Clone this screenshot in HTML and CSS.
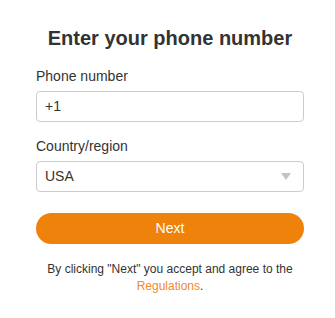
FILE: index.html
```html
<!DOCTYPE html>
<html>
<head>
<meta charset="utf-8">
<link rel="stylesheet" href="styles.css">
</head>
<body>
<div class="page">
  <h1 class="title">Enter your phone number</h1>
  <div class="field">
    <div class="label">Phone number</div>
    <div class="box">+1</div>
  </div>
  <div class="field">
    <div class="label">Country/region</div>
    <div class="box select">
      <span>USA</span>
      <span class="arrow"></span>
    </div>
  </div>
  <div class="btn">Next</div>
  <p class="note">By clicking "Next" you accept and agree to the <a class="link">Regulations</a>.</p>
</div>
</body>
</html>
```
FILE: styles.css
```css
html, body { margin: 0; padding: 0; background: #fff; }
body { font-family: "Liberation Sans", Arial, sans-serif; color: #333; }
.page { width: 268px; margin-left: 36px; padding-top: 27px; }
.title { margin: 0; font-size: 20px; font-weight: bold; text-align: center; line-height: 23px; color: #333; }
.field { margin-top: 18px; }
.field + .field { margin-top: 16px; }
.label { font-size: 14px; line-height: 16px; margin-bottom: 7px; color: #333; }
.box { box-sizing: border-box; height: 31px; border: 1px solid #ccc; border-radius: 4px; padding: 0 8px; font-size: 14px; line-height: 29px; color: #333; display: flex; align-items: center; justify-content: space-between; }
.arrow { width: 0; height: 0; border-left: 5px solid transparent; border-right: 5px solid transparent; border-top: 7px solid #c4c4c4; margin-right: 4px; }
.btn { margin-top: 21px; height: 31px; border-radius: 16px; background: #ef820a; color: #fff; font-size: 14px; text-align: center; line-height: 31px; }
.note { margin: 17px 0 0; font-size: 12px; line-height: 17px; text-align: center; color: #333; }
.link { color: #f08a30; text-decoration: none; }
```
